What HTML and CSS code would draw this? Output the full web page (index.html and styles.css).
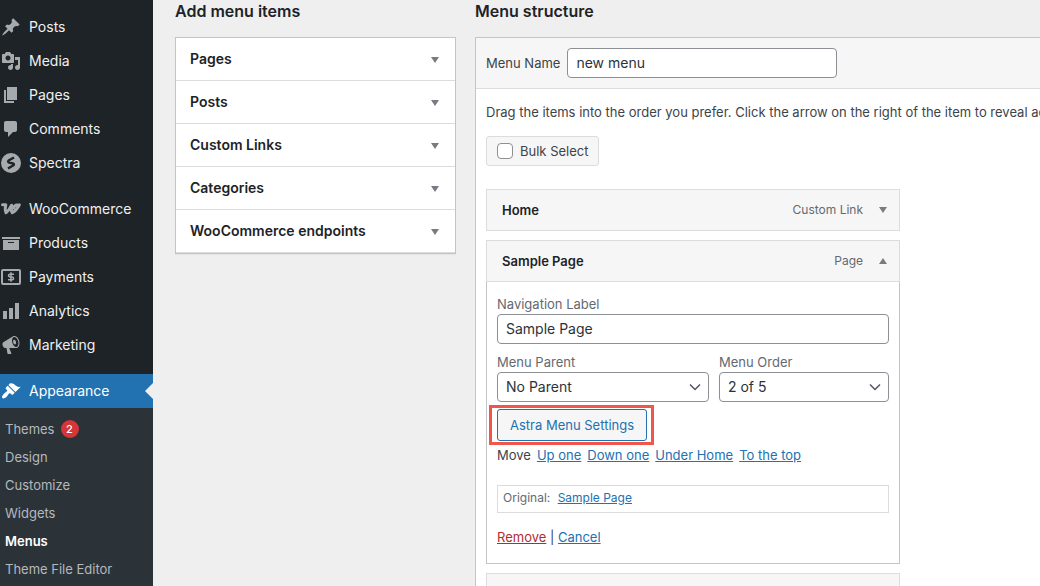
FILE: index.html
```html
<!DOCTYPE html>
<html lang="en">
  <head>
    <meta charset="UTF-8" />
    <title>Menus</title>
    <link rel="stylesheet" href="styles.css">
  </head>

  <body>
    <nav class="sidebar">
      <ul class="menu">
        <li><a href="#">
          <svg viewBox="0 0 20 20"><path d="M10.44 3.02l1.82-1.82 6.36 6.35-1.83 1.82c-1.05-.68-2.48-.57-3.41.36l-.75.75c-.92.93-1.04 2.35-.35 3.41l-1.83 1.82-2.41-2.41-2.8 2.79c-.42.42-3.38 2.71-3.8 2.29s1.86-3.39 2.28-3.81l2.79-2.79L4.1 9.36l1.83-1.82c1.05.69 2.48.57 3.4-.36l.75-.75c.93-.92 1.05-2.35.36-3.41z"/></svg>
          Posts</a></li>
        <li><a href="#">
          <svg viewBox="0 0 20 20"><path d="M13 11V4c0-.55-.45-1-1-1h-1.67L9 1H5L3.67 3H2c-.55 0-1 .45-1 1v7c0 .55.45 1 1 1h10c.55 0 1-.45 1-1zM7 4.5c1.38 0 2.5 1.12 2.5 2.5S8.38 9.5 7 9.5 4.5 8.38 4.5 7 5.62 4.5 7 4.5zM14 6h5v10.5c0 1.38-1.12 2.5-2.5 2.5S14 17.88 14 16.5s1.12-2.5 2.5-2.5c.17 0 .34.02.5.05V9h-3V6zm-4 8.05V13h2v3.5c0 1.38-1.12 2.5-2.5 2.5S7 17.88 7 16.5 8.12 14 9.5 14c.17 0 .34.02.5.05z"/></svg>
          Media</a></li>
        <li><a href="#">
          <svg viewBox="0 0 20 20"><path d="M6 15V2h10v13H6zm-1 1h8v2H3V5h2v11z"/></svg>
          Pages</a></li>
        <li><a href="#">
          <svg viewBox="0 0 20 20"><path d="M5 2h9c1.1 0 2 .9 2 2v7c0 1.1-.9 2-2 2h-2l-5 5v-5H5c-1.1 0-2-.9-2-2V4c0-1.1.9-2 2-2z"/></svg>
          Comments</a></li>
        <li><a href="#">
          <svg viewBox="0 0 20 20"><circle cx="10" cy="10" r="10"/><path class="cut" d="M13 4.5L8 7.3Q6.3 8.5 8 9.6L12 10.3Q13.8 11.3 12 12.6L7 15.5"/></svg>
          Spectra</a></li>
      </ul>

      <ul class="menu">
        <li><a href="#">
          <svg viewBox="0 0 20 20"><path class="line-bold" d="M1.5 5.8h3.3Q3.6 11 5 13.7 8 11.5 10.6 6.2 9.6 11 11.2 13.7 15.5 11.5 18.3 5.8M12.6 9Q13.5 6.2 16 6"/></svg>
          WooCommerce</a></li>
        <li><a href="#">
          <svg viewBox="0 0 20 20"><path d="M19 4v2H1V4h18zM2 7h16v10H2V7zm11 3V9H7v1h6z"/></svg>
          Products</a></li>
        <li><a href="#">
          <svg viewBox="0 0 20 20"><rect class="line" x="1" y="3" width="18" height="14" rx="1"/><path class="line-thin" d="M13 7.3H9Q7.500 7.300 7.500 8.600T9 10h2q1.500 0 1.500 1.400T11 12.700H7M10 5.300v9.400"/></svg>
          Payments</a></li>
        <li><a href="#">
          <svg viewBox="0 0 20 20"><path d="M18 18V2h-4v16h4zm-6 0V7H8v11h4zm-6 0v-8H2v8h4z"/></svg>
          Analytics</a></li>
        <li><a href="#">
          <svg viewBox="0 0 20 20"><path d="M18.15 5.94c.46 1.62.38 3.22-.02 4.48-.42 1.28-1.26 2.18-2.3 2.48-.16.06-.26.06-.4.06-.06.02-.12.02-.18.02-.06.02-.14.02-.22.02h-6.8l2.22 5.5c.02.14-.06.26-.14.34-.08.1-.24.16-.34.16H6.95c-.1 0-.26-.06-.34-.16-.08-.08-.16-.2-.14-.34l-1-5.5H4.25l-.02-.02c-.5.06-1.08-.18-1.54-.62s-.88-1.08-1.06-1.88c-.24-.8-.2-1.56-.02-2.2.18-.62.58-1.08 1.06-1.3l.02-.02 9-5.4c.1-.06.18-.1.24-.16.06-.04.14-.08.24-.12.16-.08.28-.12.5-.18 1.04-.3 2.24.1 3.22.98s1.84 2.24 2.26 3.86zm-2.58 5.98h-.02c.4-.1.74-.34 1.04-.7.58-.7.86-1.76.86-3.04 0-.64-.1-1.3-.28-1.98-.34-1.36-1.02-2.5-1.78-3.24s-1.68-1.1-2.46-.88c-.82.22-1.4.96-1.7 2-.32 1.04-.28 2.36.06 3.72.38 1.36 1 2.5 1.8 3.24.78.74 1.62 1.1 2.48.88zm-2.54-7.08c.22-.04.42-.02.62.04.38.16.76.48 1.02 1s.42 1.2.42 1.78c0 .3-.04.56-.12.8-.18.48-.44.84-.86.94-.34.1-.8-.06-1.14-.4s-.64-.86-.78-1.5c-.18-.62-.12-1.24.02-1.72s.48-.84.82-.94z"/></svg>
          Marketing</a></li>
      </ul>

      <ul class="menu">
        <li class="current"><a href="#">
          <svg viewBox="0 0 20 20"><path d="M14.48 11.06L7.41 3.99l1.5-1.5c.5-.56 2.3-.47 3.51.32 1.21.8 1.43 1.28 2.91 2.1 1.18.64 2.45 1.26 4.45.85zm-.71.71L6.7 4.7 4.93 6.47c-.39.39-.39 1.02 0 1.41l1.06 1.06c.39.39.39 1.03 0 1.42-.6.6-1.43 1.11-2.21 1.69-.35.26-.7.53-1.01.84C1.43 14.23.4 16.08 1.4 17.07c.99 1 2.84-.03 4.18-1.36.31-.31.58-.66.85-1.02.57-.78 1.08-1.61 1.69-2.21.39-.39 1.02-.39 1.41 0l1.06 1.06c.39.39 1.02.39 1.41 0z"/></svg>
          Appearance</a></li>
      </ul>

      <ul class="submenu">
        <li><a href="#">Themes <span class="count">2</span></a></li>
        <li><a href="#">Design</a></li>
        <li><a href="#">Customize</a></li>
        <li><a href="#">Widgets</a></li>
        <li><a href="#" class="active">Menus</a></li>
        <li><a href="#">Theme File Editor</a></li>
      </ul>
    </nav>

    <main class="content">
      <section class="add-items">
        <h2>Add menu items</h2>
        <div class="accordion">
          <button type="button">Pages <span class="arrow"></span></button>
          <button type="button">Posts <span class="arrow"></span></button>
          <button type="button">Custom Links <span class="arrow"></span></button>
          <button type="button">Categories <span class="arrow"></span></button>
          <button type="button">WooCommerce endpoints <span class="arrow"></span></button>
        </div>
      </section>

      <section class="structure">
        <h2>Menu structure</h2>
        <div class="panel">
          <div class="panel-header">
            <label for="menu-name">Menu Name</label>
            <input type="text" id="menu-name" value="new menu" />
          </div>

          <div class="panel-body">
            <p class="intro">Drag the items into the order you prefer. Click the arrow on the right of the item to reveal additional configuration options.</p>
            <label class="bulk" for="bulk-select">
              <input type="checkbox" id="bulk-select" /> Bulk Select
            </label>

            <div class="item">
              <div class="item-bar">
                <strong>Home</strong>
                <span>Custom Link</span>
                <span class="arrow"></span>
              </div>
            </div>

            <div class="item">
              <div class="item-bar">
                <strong>Sample Page</strong>
                <span>Page</span>
                <span class="arrow up"></span>
              </div>
              <div class="item-settings">
                <div class="field">
                  <label for="nav-label">Navigation Label</label>
                  <input type="text" id="nav-label" value="Sample Page" />
                </div>

                <div class="field-row">
                  <div class="field">
                    <label for="menu-parent">Menu Parent</label>
                    <select id="menu-parent"><option>No Parent</option></select>
                  </div>
                  <div class="field">
                    <label for="menu-order">Menu Order</label>
                    <select id="menu-order"><option>2 of 5</option></select>
                  </div>
                </div>

                <div class="astra">
                  <button type="button">Astra Menu Settings</button>
                </div>

                <div class="move">
                  <span>Move</span>
                  <a href="#">Up one</a>
                  <a href="#">Down one</a>
                  <a href="#">Under Home</a>
                  <a href="#">To the top</a>
                </div>

                <div class="original">Original: <a href="#">Sample Page</a></div>

                <div class="actions"><a href="#" class="remove">Remove</a> | <a href="#">Cancel</a></div>
              </div>
            </div>

            <div class="item">
              <div class="item-bar"></div>
            </div>
          </div>
        </div>
      </section>
    </main>
  </body>
</html>
```
FILE: styles.css
```css
* {
  box-sizing: border-box;
}

html,
body {
  margin: 0;
  height: 100%;
}

body {
  display: flex;
  overflow: hidden;
  background: #efefef;
  color: #3c434a;
  font-family: Inter, "Liberation Sans", sans-serif;
  font-size: 13px;
  line-height: 20px;
}

a {
  color: #2271b1;
}

ul {
  list-style: none;
  margin: 0;
  padding: 0;
}

h2 {
  margin: 0 0 16px;
  color: #1d2327;
  font-size: 16px;
  font-weight: 600;
  line-height: 20px;
}

input,
select,
button {
  font-family: inherit;
}

/* Sidebar */
.sidebar {
  flex: none;
  display: flex;
  flex-direction: column;
  width: 153px;
  height: 100%;
  padding-top: 10px;
  background: #1d2327;
}

.menu + .menu {
  margin-top: 12px;
}

.menu a {
  display: flex;
  align-items: center;
  gap: 8px;
  height: 34px;
  padding-left: 1px;
  color: #f0f0f1;
  font-size: 14px;
  text-decoration: none;
}

.menu svg {
  width: 20px;
  height: 20px;
  fill: #a7aaad;
}

.menu .cut {
  fill: none;
  stroke: #1d2327;
  stroke-width: 2.4;
}

.menu .line,
.menu .line-thin,
.menu .line-bold {
  fill: none;
  stroke: #a7aaad;
  stroke-width: 2;
}

.menu .line-thin {
  stroke-width: 1.6;
}

.menu .line-bold {
  stroke-width: 3;
  stroke-linejoin: round;
  stroke-linecap: round;
}

.menu .current {
  position: relative;
  background: #2271b1;
}

.menu .current a {
  color: #fff;
}

.menu .current svg {
  fill: #fff;
}

.menu .current::after {
  content: "";
  position: absolute;
  top: 9px;
  right: 0;
  border: 8px solid transparent;
  border-left: 0;
  border-right-color: #efefef;
}

.submenu {
  flex: 1;
  padding: 7px 0 0 5px;
  background: #2c3338;
}

.submenu a {
  display: flex;
  align-items: center;
  gap: 6px;
  height: 28px;
  color: #b4b9be;
  text-decoration: none;
}

.submenu .active {
  color: #fff;
  font-weight: 600;
}

.count {
  width: 18px;
  height: 18px;
  border-radius: 9px;
  background: #d63638;
  color: #fff;
  font-size: 11px;
  font-weight: 500;
  line-height: 18px;
  text-align: center;
}

/* Content */
.content {
  flex: 1;
  display: grid;
  grid-template-columns: 281px 1fr;
  gap: 19px;
  min-width: 0;
  padding: 1px 0 0 22px;
}

.arrow {
  border: 4px solid transparent;
  border-top: 6px solid #787c82;
  border-bottom: 0;
}

.arrow.up {
  border-top: 0;
  border-bottom: 6px solid #787c82;
}

.accordion {
  border: 1px solid #c3c4c7;
  box-shadow: 0 1px 1px rgba(0, 0, 0, 0.04);
}

.accordion button {
  display: flex;
  align-items: center;
  justify-content: space-between;
  width: 100%;
  height: 43px;
  padding: 0 16px 1px 14px;
  border: 0;
  border-bottom: 1px solid #dcdcde;
  background: #fff;
  color: #1d2327;
  font-size: 14px;
  font-weight: 600;
}

.accordion .arrow {
  margin-top: 3px;
}

.structure {
  min-width: 0;
}

.panel {
  border: 1px solid #c3c4c7;
  border-right: 0;
  background: #fff;
}

.panel-header {
  display: flex;
  align-items: center;
  gap: 7px;
  padding: 10px;
  border-bottom: 1px solid #dcdcde;
  background: #f6f6f6;
}

input[type="text"],
select {
  height: 30px;
  padding: 0 8px 2px;
  border: 1px solid #8c8f94;
  border-radius: 4px;
  background: #fff;
  color: #2c3338;
  font-size: 14px;
}

.panel-header input {
  width: 270px;
}

.panel-body {
  padding: 13px 10px 0;
}

.intro {
  margin: 0 -10px 14px 0;
  overflow: hidden;
  white-space: nowrap;
}

.bulk {
  display: flex;
  align-items: center;
  gap: 7px;
  width: fit-content;
  height: 30px;
  margin-bottom: 23px;
  padding: 0 10px;
  border: 1px solid #dcdcde;
  border-radius: 3px;
  background: #f6f6f6;
}

.bulk input {
  appearance: none;
  width: 16px;
  height: 16px;
  margin: 0;
  border: 1px solid #8c8f94;
  border-radius: 4px;
  background: #fff;
}

.item {
  max-width: 414px;
  margin-bottom: 9px;
}

.item-bar {
  display: flex;
  align-items: center;
  height: 42px;
  padding: 0 12px 1px 15px;
  border: 1px solid #dcdcde;
  background: #f6f6f6;
  color: #646970;
  font-size: 12px;
}

.item-bar strong {
  flex: 1;
  color: #1d2327;
  font-size: 13px;
  font-weight: 600;
}

.item-bar .arrow {
  margin-left: 16px;
}

.item-settings {
  padding: 12px 10px 16px;
  border: 1px solid #c3c4c7;
  border-top: 0;
}

.field {
  display: flex;
  flex-direction: column;
  color: #646970;
}

.field-row {
  display: grid;
  grid-template-columns: 212px 1fr;
  gap: 10px;
  margin: 8px 0 7px;
}

select {
  appearance: none;
  background: #fff url("data:image/svg+xml,%3Csvg xmlns='http://www.w3.org/2000/svg' viewBox='0 0 12 8'%3E%3Cpath d='M1 1.5l5 5 5-5' fill='none' stroke='%2350575e' stroke-width='1.5'/%3E%3C/svg%3E") no-repeat right 7px center / 12px 8px;
}

.astra {
  position: relative;
  width: fit-content;
}

.astra button {
  display: block;
  height: 32px;
  padding: 0 12px;
  border: 1px solid #2271b1;
  border-radius: 3px;
  background: #f6f6f6;
  color: #2271b1;
  font-size: 13px;
}

/* red frame around the button */
.astra::after {
  content: "";
  position: absolute;
  inset: -4px -7px -4px -8px;
  border: 3px solid #f0564a;
  pointer-events: none;
}

.move {
  display: flex;
  gap: 6px;
  margin: 4px 0 20px;
}

.original {
  height: 28px;
  margin-bottom: 14px;
  padding: 0 5px;
  border: 1px solid #dcdcde;
  color: #646970;
  font-size: 12px;
  line-height: 24px;
}

.original a {
  margin-left: 4px;
}

.remove {
  color: #b32d2e;
}
```
